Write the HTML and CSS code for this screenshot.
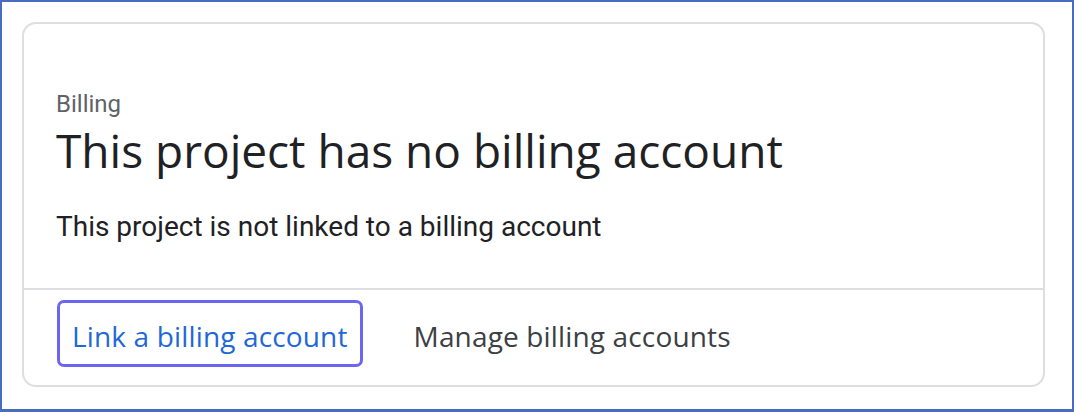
FILE: index.html
```html
<!DOCTYPE html>
<html lang="en">
<head>
<meta charset="utf-8">
<title>Billing</title>
<link rel="stylesheet" href="styles.css">
</head>
<body>
<div class="frame">
  <section class="card">
    <div class="card-body">
      <div class="eyebrow">Billing</div>
      <h1 class="title">This project has no billing account</h1>
      <p class="desc">This project is not linked to a billing account</p>
    </div>
    <div class="card-actions">
      <button class="btn btn-primary" type="button">Link a billing account</button>
      <button class="btn btn-plain" type="button">Manage billing accounts</button>
    </div>
  </section>
</div>
</body>
</html>
```
FILE: styles.css
```css
* { box-sizing: border-box; }
html, body { margin: 0; padding: 0; background: #fff; }
.frame {
  width: 1074px;
  height: 412px;
  border: 2px solid #4a6cc0;
  border-bottom-width: 3px;
  padding: 20px;
}
.card {
  width: 1023px;
  height: 365px;
  border: 2px solid #dedee2;
  border-radius: 14px;
  display: flex;
  flex-direction: column;
}
.card-body {
  padding: 66px 32px 45px;
  border-bottom: 2px solid #dedee2;
}
.eyebrow {
  font-family: Roboto, "Liberation Sans", sans-serif;
  font-size: 24px;
  line-height: 28px;
  color: #5f6368;
}
.title {
  margin: 6px 0 0;
  font-family: "Open Sans", sans-serif;
  font-weight: 400;
  font-size: 46px;
  line-height: 52px;
  color: #202124;
}
.desc {
  margin: 35px 0 0;
  font-family: Roboto, "Liberation Sans", sans-serif;
  font-size: 28px;
  line-height: 32px;
  color: #202124;
}
.card-actions {
  display: flex;
  align-items: center;
  gap: 36px;
  padding: 10px 33px 0;
}
.btn {
  height: 67px;
  padding: 4px 12px 0;
  border: 3px solid transparent;
  border-radius: 7px;
  background: #fff;
  font-family: "Open Sans", sans-serif;
  font-weight: 500;
  font-size: 28px;
  line-height: 36px;
  letter-spacing: 0.15px;
}
.btn-primary {
  border-color: #6b66f0;
  color: #1f68d8;
}
.btn-plain {
  color: #3c4043;
}
```
